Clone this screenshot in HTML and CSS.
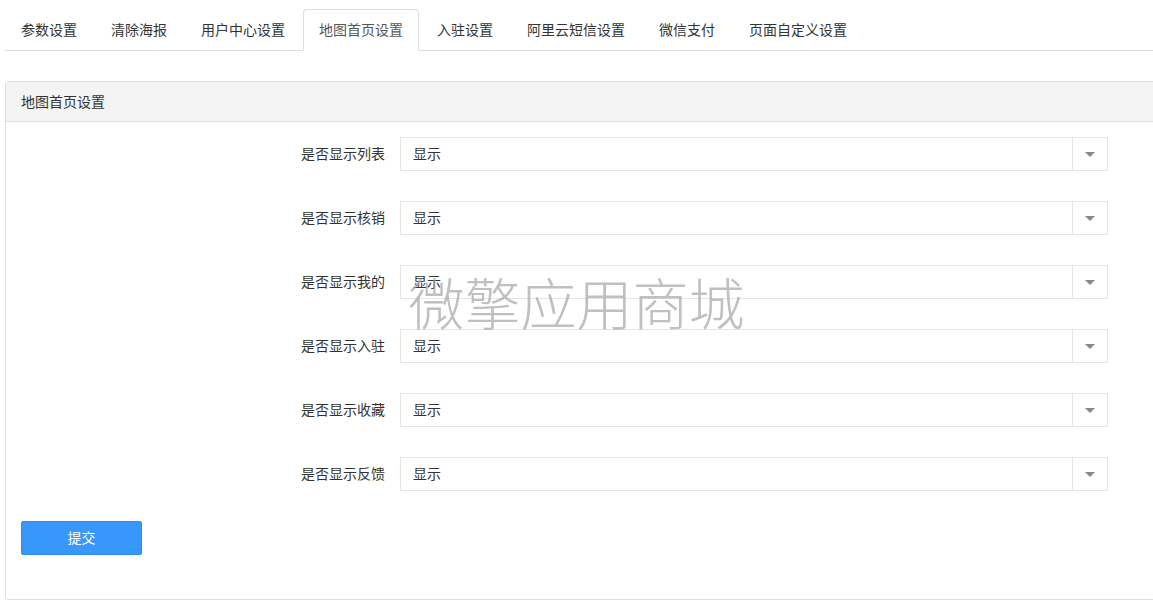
FILE: index.html
```html
<!DOCTYPE html>
<html lang="zh-CN">
<head>
<meta charset="utf-8">
<title>地图首页设置</title>
<link rel="stylesheet" href="styles.css">
</head>
<body>
<div class="page">
  <ul class="tabs">
    <li class="tab">参数设置</li>
    <li class="tab">清除海报</li>
    <li class="tab">用户中心设置</li>
    <li class="tab active">地图首页设置</li>
    <li class="tab">入驻设置</li>
    <li class="tab">阿里云短信设置</li>
    <li class="tab">微信支付</li>
    <li class="tab">页面自定义设置</li>
  </ul>

  <div class="panel">
    <div class="panel-heading">地图首页设置</div>
    <div class="panel-body">
      <div class="form-row">
        <label class="label">是否显示列表</label>
        <div class="select"><span class="value">显示</span><span class="arrow"></span></div>
      </div>
      <div class="form-row">
        <label class="label">是否显示核销</label>
        <div class="select"><span class="value">显示</span><span class="arrow"></span></div>
      </div>
      <div class="form-row">
        <label class="label">是否显示我的</label>
        <div class="select"><span class="value">显示</span><span class="arrow"></span></div>
      </div>
      <div class="form-row">
        <label class="label">是否显示入驻</label>
        <div class="select"><span class="value">显示</span><span class="arrow"></span></div>
      </div>
      <div class="form-row">
        <label class="label">是否显示收藏</label>
        <div class="select"><span class="value">显示</span><span class="arrow"></span></div>
      </div>
      <div class="form-row">
        <label class="label">是否显示反馈</label>
        <div class="select"><span class="value">显示</span><span class="arrow"></span></div>
      </div>
      <div class="form-row">
        <button class="btn">提交</button>
      </div>
    </div>
  </div>
</div>
<div class="watermark">微擎应用商城</div>
</body>
</html>
```

FILE: styles.css
```css
* { box-sizing: border-box; }
html, body { margin: 0; padding: 0; }
body {
  font-family: "Noto Sans CJK SC", "Liberation Sans", sans-serif;
  font-size: 14px;
  line-height: 20px;
  color: #333;
  background: #fff;
  overflow: hidden;
}
.page {
  padding: 9px 0 0 5px;
  width: 1170px;
}
.tabs {
  list-style: none;
  margin: 0;
  padding: 0;
  display: flex;
  border-bottom: 1px solid #ddd;
}
.tab {
  padding: 9px 15px 11px;
  border: 1px solid transparent;
  border-radius: 4px 4px 0 0;
  margin-right: 2px;
  margin-bottom: -1px;
  color: #333;
  line-height: 20px;
}
.tab.active {
  border-color: #ddd;
  border-bottom-color: #fff;
  background: #fff;
  color: #555;
}
.panel {
  margin-top: 30px;
  border: 1px solid #ddd;
  border-radius: 3px;
  background: #fff;
}
.panel-heading {
  background: #f4f4f4;
  border-bottom: 1px solid #ddd;
  padding: 9px 15px 10px;
  line-height: 20px;
  height: 40px;
}
.panel-body {
  padding: 15px 15px 14px;
}
.form-row {
  display: flex;
  align-items: center;
  gap: 15px;
  margin-bottom: 30px;
}
.label {
  width: 364px;
  text-align: right;
  padding-bottom: 2px;
}
.select {
  width: 708px;
  height: 34px;
  border: 1px solid #e5e5e5;
  display: flex;
  align-items: center;
}
.value {
  flex: 1;
  padding-left: 12px;
  padding-bottom: 2px;
}
.arrow {
  width: 35px;
  height: 32px;
  border-left: 1px solid #e5e5e5;
  position: relative;
}
.arrow::after {
  content: "";
  position: absolute;
  left: 12px;
  top: 14px;
  border-left: 5px solid transparent;
  border-right: 5px solid transparent;
  border-top: 5px solid #888;
}
.btn {
  width: 121px;
  height: 34px;
  background: #3797fb;
  border: 1px solid #2e8cf0;
  border-radius: 2px;
  color: #fff;
  font-family: inherit;
  font-size: 14px;
  line-height: 20px;
  padding: 0 0 2px;
}
.watermark {
  position: fixed;
  left: 0;
  right: 0;
  top: 269px;
  text-align: center;
  font-size: 56px;
  line-height: 64px;
  color: rgba(165, 165, 165, 0.7);
  pointer-events: none;
  font-weight: 300;
}
```
